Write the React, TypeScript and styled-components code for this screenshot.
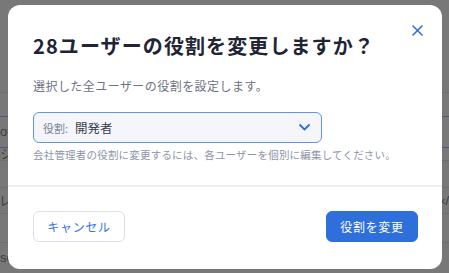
import React from "react";
import styled, { createGlobalStyle } from "styled-components";

const Global = createGlobalStyle`
  html, body { margin: 0; padding: 0; }
  body {
    width: 449px;
    height: 273px;
    overflow: hidden;
    background: #787878;
    font-family: "Noto Sans CJK JP", "Noto Sans", sans-serif;
  }
`;

const Page = styled.div`
  position: relative;
  width: 449px;
  height: 273px;
  overflow: hidden;
  background: #787878;
`;

const BackTable = styled.div`
  position: absolute;
  inset: 0;
  display: flex;
  flex-direction: column;
  padding-top: 92px;
`;

const BackRow = styled.div<{ $h: number; $blue?: boolean }>`
  height: ${(p) => p.$h}px;
  border-top: 1px solid ${(p) => (p.$blue ? "#4a5a80" : "#6e6e6e")};
  color: #3c3c3c;
  font-family: "Liberation Sans", sans-serif;
  font-size: 13px;
  line-height: ${(p) => p.$h}px;
  display: flex;
  justify-content: space-between;
`;

const Overlay = styled.div`
  position: absolute;
  inset: 0;
  padding: 5px 7px 4px 8px;
  box-sizing: border-box;
  display: flex;
  align-items: flex-start;
`;

const Modal = styled.div`
  position: relative;
  width: 434px;
  height: 264px;
  background: #ffffff;
  border-radius: 12px;
  display: flex;
  flex-direction: column;
  box-sizing: border-box;
`;

const Body = styled.div`
  padding: 26px 25px 0 25px;
  display: flex;
  flex-direction: column;
`;

const Title = styled.h2`
  margin: 0;
  font-size: 20px;
  line-height: 30px;
  font-weight: 700;
  color: #1f2535;
  letter-spacing: 1.1px;
`;

const Subtitle = styled.p`
  margin: 17px 0 0 0;
  font-size: 12px;
  line-height: 16px;
  color: #6d7284;
  letter-spacing: 0.45px;
`;

const Select = styled.div`
  margin-top: 18px;
  width: 289px;
  height: 31px;
  box-sizing: border-box;
  border: 1px solid #6393e6;
  border-radius: 6px;
  background: #f4f6fb;
  display: flex;
  align-items: center;
  padding: 0 11px 0 9px;
`;

const SelectLabel = styled.span`
  font-size: 11px;
  color: #7c849a;
  margin-right: 7px;
`;

const SelectValue = styled.span`
  flex: 1;
  font-size: 12.5px;
  font-weight: 400;
  color: #3a3f4c;
`;

const Helper = styled.p`
  margin: 4px 0 0 0;
  font-size: 10.5px;
  line-height: 16px;
  color: #8d94a8;
  letter-spacing: 0.2px;
`;

const Divider = styled.div`
  margin-top: 22px;
  height: 2px;
  background: #eeeff5;
`;

const Footer = styled.div`
  padding: 24px 24px 0 25px;
  display: flex;
  justify-content: space-between;
`;

const Button = styled.button<{ $primary?: boolean }>`
  height: 31px;
  width: 92px;
  box-sizing: border-box;
  border-radius: 6px;
  border: 1px solid ${(p) => (p.$primary ? "#2f6fdc" : "#dcdfea")};
  background: ${(p) => (p.$primary ? "#2f6fdc" : "#ffffff")};
  color: ${(p) => (p.$primary ? "#ffffff" : "#3a74dc")};
  font-family: "Noto Sans CJK JP", sans-serif;
  font-size: 12px;
  letter-spacing: 0.7px;
  padding: 0;
  cursor: pointer;
`;

const Close = styled.button`
  position: absolute;
  top: 17px;
  right: 17px;
  width: 16px;
  height: 16px;
  padding: 0;
  border: none;
  background: transparent;
  display: flex;
  align-items: center;
  justify-content: center;
`;

export default function App() {
  return (
    <Page>
      <Global />
      <BackTable>
        <BackRow $h={26}><span /> <span /></BackRow>
        <BackRow $h={30} $blue><span>ot</span><span /></BackRow>
        <BackRow $h={12} $blue><span>ジ</span><span /></BackRow>
        <BackRow $h={30}><span /><span /></BackRow>
        <BackRow $h={25}><span>レ</span><span>‹/</span></BackRow>
        <BackRow $h={32}><span /><span /></BackRow>
        <BackRow $h={30}><span>se</span><span /></BackRow>
      </BackTable>
      <Overlay>
        <Modal role="dialog">
          <Close aria-label="閉じる">
            <svg width="11" height="11" viewBox="0 0 11 11">
              <path d="M1 1 L10 10 M10 1 L1 10" stroke="#2f6fdc" strokeWidth="1.6" strokeLinecap="round" />
            </svg>
          </Close>
          <Body>
            <Title>28ユーザーの役割を変更しますか？</Title>
            <Subtitle>選択した全ユーザーの役割を設定します。</Subtitle>
            <Select>
              <SelectLabel>役割:</SelectLabel>
              <SelectValue>開発者</SelectValue>
              <svg width="11" height="7" viewBox="0 0 11 7">
                <path d="M1 1 L5.5 5.5 L10 1" fill="none" stroke="#2f6fdc" strokeWidth="1.8" strokeLinecap="round" strokeLinejoin="round" />
              </svg>
            </Select>
            <Helper>会社管理者の役割に変更するには、各ユーザーを個別に編集してください。</Helper>
          </Body>
          <Divider />
          <Footer>
            <Button>キャンセル</Button>
            <Button $primary>役割を変更</Button>
          </Footer>
        </Modal>
      </Overlay>
    </Page>
  );
}
